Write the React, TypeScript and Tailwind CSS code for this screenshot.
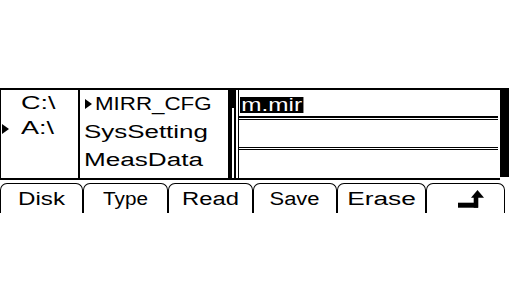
import React from 'react';

const Tri = ({ className = '' }: { className?: string }) => (
  <svg width="7" height="10" viewBox="0 0 7 10" className={className}>
    <polygon points="0,0 7,5 0,10" fill="#000" />
  </svg>
);

const S = ({ children, k = 'scale-x-[1.35]', center }: { children: React.ReactNode; k?: string; center?: boolean }) => (
  <span className={`inline-block ${k} ${center ? 'origin-center' : 'origin-left'}`}>{children}</span>
);

const tabs = [
  { label: 'Disk', w: 'w-[83px]', k: 'scale-x-[1.34]' },
  { label: 'Type', w: 'w-[85px]', k: 'scale-x-[1.15]' },
  { label: 'Read', w: 'w-[85px]', k: 'scale-x-[1.32]' },
  { label: 'Save', w: 'w-[84px]', k: 'scale-x-[1.22]' },
  { label: 'Erase', w: 'w-[89px]', k: 'scale-x-[1.46]' },
  { label: '', w: 'w-[79px]', k: '' },
];

export default function App() {
  return (
    <div className="w-[509px] h-[298px] bg-white pt-[88px] text-black text-[18px] font-['Liberation_Sans',Arial,sans-serif] overflow-hidden">
      {/* screen */}
      <div className="flex items-start">
        <div className="w-[500px] h-[92px] border-t-2 border-b-2 border-l border-black flex">
          {/* disks */}
          <div className="w-[79px] border-r-2 border-black pt-[1px]">
            <div className="h-[25px] leading-[25px] flex items-center">
              <div className="w-[20px]" />
              <S k="scale-x-[1.5]">C:\</S>
            </div>
            <div className="h-[25px] leading-[25px] flex items-center">
              <div className="w-[20px] pl-[1px] flex items-center">
                <Tri />
              </div>
              <S k="scale-x-[1.5]">A:\</S>
            </div>
          </div>

          {/* folders */}
          <div className="w-[148px]">
            <div className="h-[28px] leading-[28px] flex items-center pl-[5px] gap-[3px]">
              <Tri />
              <S k="scale-x-[1.24]">MIRR_CFG</S>
            </div>
            <div className="h-[28px] leading-[28px] pl-[4px]">
              <S k="scale-x-[1.44]">SysSetting</S>
            </div>
            <div className="h-[28px] leading-[28px] pl-[4px]">
              <S k="scale-x-[1.45]">MeasData</S>
            </div>
          </div>

          {/* scrollbar */}
          <div className="w-[8px] h-full flex flex-col">
            <div className="h-[18px] bg-black" />
            <div className="flex-1 border-l-[4px] border-r-[2px] border-black" />
          </div>

          {/* files */}
          <div className="ml-[2px] w-[260px] border-l border-black">
            <div className="h-[28px] border-b-2 border-black pt-[2px] pl-[1px]">
              <span className="inline-block origin-left scale-x-[1.35] bg-black text-white h-[16px] leading-[16px] px-[1px]">
                m.mir
              </span>
            </div>
            <div className="mt-[1px] h-[29px] border-y border-black" />
            <div className="mt-[1px] h-[29px] border-t border-black" />
          </div>
        </div>
        <div className="w-[9px] h-[89px] bg-black" />
      </div>

      {/* softkeys */}
      <div className="mt-[3px] flex">
        {tabs.map((t, i) => (
          <div
            key={i}
            className={`${t.w} h-[30px] border-t border-x border-black rounded-t-[7px] flex items-center justify-center leading-[30px] pt-[1px]`}
          >
            {t.label ? (
              <S center k={t.k}>{t.label}</S>
            ) : (
              <svg width="27" height="19" viewBox="0 0 27 19" className="ml-[9px] -mt-[1px]">
                <rect x="1" y="13.7" width="20" height="5" fill="#000" />
                <rect x="16.7" y="7" width="4.6" height="11.7" fill="#000" />
                <polygon points="14,8.7 27,8.7 20.5,1" fill="#000" />
              </svg>
            )}
          </div>
        ))}
      </div>
    </div>
  );
}
